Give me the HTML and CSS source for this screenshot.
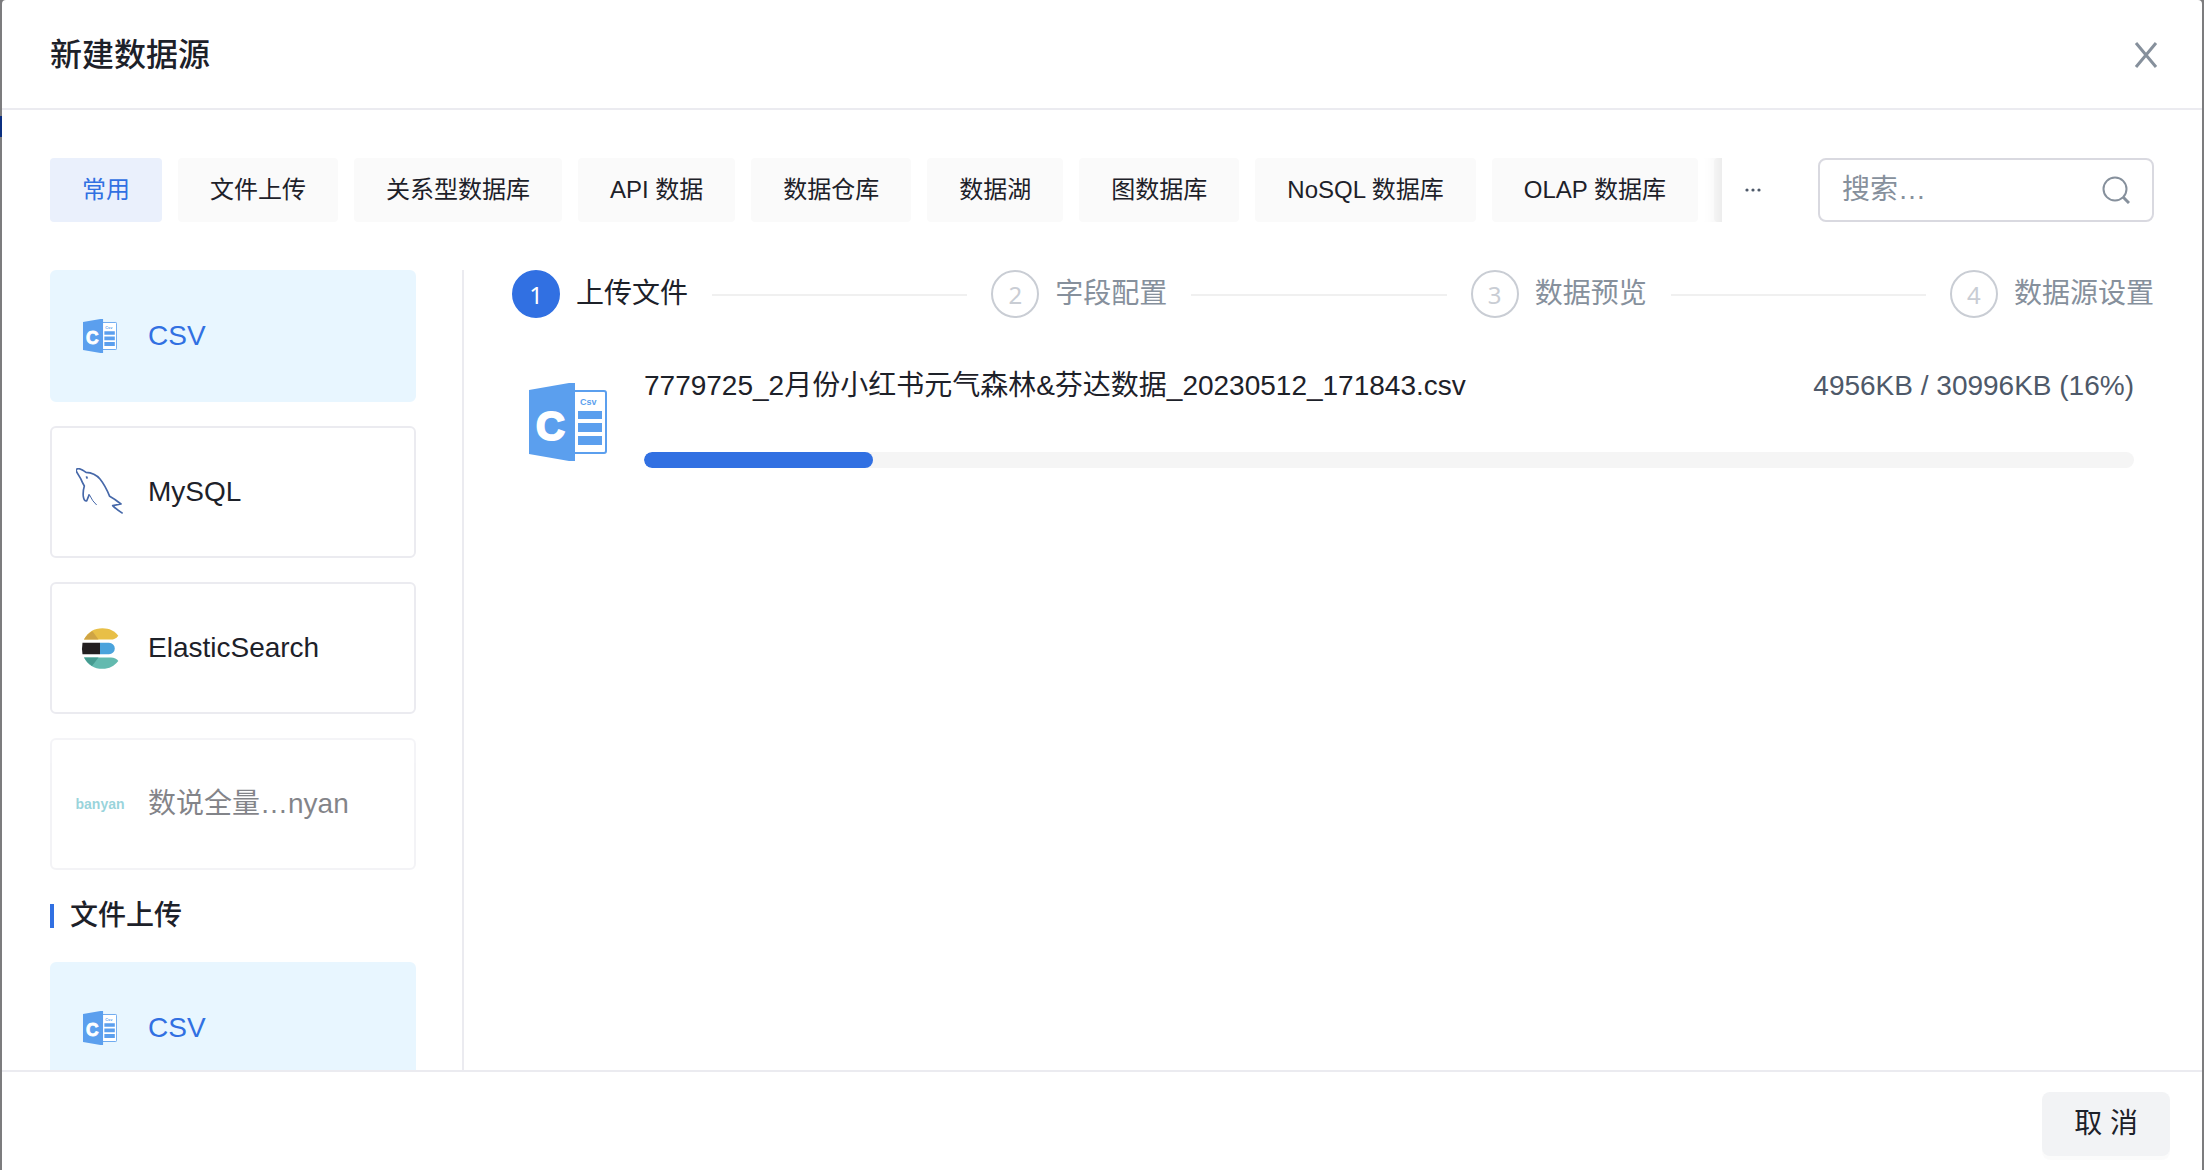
FILE: index.html
```html
<!DOCTYPE html>
<html lang="zh-CN">
<head>
<meta charset="utf-8">
<title>新建数据源</title>
<link rel="stylesheet" href="styles.css">
</head>
<body>
<div class="dialog" role="dialog" aria-labelledby="dialog-title">
  <header class="dialog-header">
    <h1 id="dialog-title" class="dialog-title">新建数据源</h1>
    <button class="close" type="button" aria-label="关闭">
      <svg width="24" height="26" viewBox="0 0 24 26"><path d="M2 1 22 25M22 1 2 25" fill="none" stroke="#86909c" stroke-width="3"/></svg>
    </button>
  </header>

  <main class="dialog-body">
    <div class="toolbar">
      <nav class="tabs">
        <button class="tab tab-active" type="button">常用</button>
        <button class="tab" type="button">文件上传</button>
        <button class="tab" type="button">关系型数据库</button>
        <button class="tab" type="button">API 数据</button>
        <button class="tab" type="button">数据仓库</button>
        <button class="tab" type="button">数据湖</button>
        <button class="tab" type="button">图数据库</button>
        <button class="tab" type="button">NoSQL 数据库</button>
        <button class="tab" type="button">OLAP 数据库</button>
        <button class="tab" type="button"></button>
      </nav>
      <button class="more" type="button" aria-label="更多">
        <svg width="18" height="4" viewBox="0 0 18 4" fill="#4e5969"><circle cx="3" cy="2" r="1.600"/><circle cx="9" cy="2" r="1.600"/><circle cx="15" cy="2" r="1.600"/></svg>
      </button>
      <label class="search">
        <input class="search-input" type="text" placeholder="搜索…" aria-label="搜索">
        <svg width="28" height="28" viewBox="0 0 28 28" fill="none" stroke="#86909c" stroke-width="2"><circle cx="13" cy="13" r="11.500"/><path d="m21 21 6 6" stroke-width="3"/></svg>
      </label>
    </div>

    <div class="content">
      <aside class="sources">
        <button class="source source-active" type="button">
          <span class="source-icon">
            <svg width="34" height="34" viewBox="0 0 78 78">
              <rect x="40" y="8" width="37" height="62" rx="2" fill="#fff" stroke="#5b9fee" stroke-width="2"/>
              <path d="M0 7 40 0h6v78h-6L0 71z" fill="#5b9fee"/>
              <path d="M49 28h24v8H49zM49 40h24v9H49zM49 53h24v9H49z" fill="#5b9fee"/>
              <text x="7" y="57" class="csv-letter">C</text>
              <text x="51" y="22" class="csv-tag">Csv</text>
            </svg>
          </span>CSV
        </button>
        <button class="source" type="button">
          <span class="source-icon">
            <svg width="48" height="48" viewBox="48 54 144 144" fill="none" stroke="#4668a9" stroke-width="5" stroke-linejoin="round">
              <path d="M88 133 80 153Q72 154 70 140 68 125 73 108 68 100 62 86L50 66Q46 57 54 56 62 55 78 67 104 68 120 87 136 107 149 139 165 148 183 162L158 167Q165 175 188 190"/>
              <path d="M88 134Q98 155 110 165" stroke-width="3"/>
              <path d="m79 79 3 7"/>
            </svg>
          </span>MySQL
        </button>
        <button class="source" type="button">
          <span class="source-icon">
            <svg width="48" height="48" viewBox="0 0 48 48">
              <path d="M8 15.6C12 8 18 4.3 26.5 4.3c7 0 12 2.700 15.800 7.500C40 15 37.500 15.600 35 15.600z" fill="#e8bf47"/>
              <path d="M8 15.600Q11 10 16.500 7.300L22.500 15.600z" fill="#cfa444"/>
              <path d="M6.500 18.700H24V30.300H6.500Q5.500 24.500 6.500 18.700z" fill="#231f20"/>
              <path d="M24 18.700h9a5.800 5.800 0 0 1 0 11.600h-9z" fill="#4aa3dc"/>
              <path d="M8 33.400H35c3 0 6 1.200 7.300 3.600-4 5-9 7.800-15.800 7.800C18 44.800 12 41 8 33.400z" fill="#63baaf"/>
              <path d="M8 33.400H22.500L16 42Q11 39 8 33.400z" fill="#459b90"/>
            </svg>
          </span>ElasticSearch
        </button>
        <button class="source" type="button" disabled>
          <span class="source-icon source-wordmark">banyan</span>数说全量…nyan
        </button>
        <h2 class="group-title">文件上传</h2>
        <button class="source source-active" type="button">
          <span class="source-icon">
            <svg width="34" height="34" viewBox="0 0 78 78">
              <rect x="40" y="8" width="37" height="62" rx="2" fill="#fff" stroke="#5b9fee" stroke-width="2"/>
              <path d="M0 7 40 0h6v78h-6L0 71z" fill="#5b9fee"/>
              <path d="M49 28h24v8H49zM49 40h24v9H49zM49 53h24v9H49z" fill="#5b9fee"/>
              <text x="7" y="57" class="csv-letter">C</text>
              <text x="51" y="22" class="csv-tag">Csv</text>
            </svg>
          </span>CSV
        </button>
      </aside>

      <section class="panel">
        <ol class="steps">
          <li class="step step-active"><span class="step-number">1</span>上传文件</li>
          <li class="step"><span class="step-number">2</span>字段配置</li>
          <li class="step"><span class="step-number">3</span>数据预览</li>
          <li class="step"><span class="step-number">4</span>数据源设置</li>
        </ol>
        <div class="upload">
          <svg class="upload-icon" width="80" height="78" viewBox="0 0 78 78">
            <rect x="40" y="8" width="37" height="62" rx="2" fill="#fff" stroke="#5b9fee" stroke-width="2"/>
            <path d="M0 7 40 0h6v78h-6L0 71z" fill="#5b9fee"/>
            <path d="M49 28h24v8H49zM49 40h24v9H49zM49 53h24v9H49z" fill="#5b9fee"/>
            <text x="7" y="57" class="csv-letter">C</text>
            <text x="51" y="22" class="csv-tag">Csv</text>
          </svg>
          <div class="upload-info">
            <div class="upload-text">
              <span>7779725_2月份小红书元气森林&amp;芬达数据_20230512_171843.csv</span>
              <span class="upload-size">4956KB / 30996KB (16%)</span>
            </div>
            <div class="progress" role="progressbar" aria-label="上传进度" aria-valuenow="16" aria-valuemin="0" aria-valuemax="100">
              <div class="progress-fill" style="width:15.4%"></div>
            </div>
          </div>
        </div>
      </section>
    </div>
  </main>

  <footer class="dialog-footer">
    <button class="cancel" type="button">取 消</button>
  </footer>
</div>
</body>
</html>
```
FILE: styles.css
```css
* {
  box-sizing: border-box;
}

body {
  margin: 0;
  height: 100vh;
  padding: 0 2px;
  overflow: hidden;
  background:
    linear-gradient(#0b2f80, #0b2f80) 0 116px / 2px 21px no-repeat,
    #7c7c7e;
  color: #1d2129;
  font: 28px/44px "Liberation Sans", "Noto Sans CJK SC", sans-serif;
}

button,
input {
  margin: 0;
  padding: 0;
  border: 0;
  background: none;
  color: inherit;
  font: inherit;
}

svg {
  display: block;
}

.csv-letter {
  fill: #fff;
  stroke: #fff;
  stroke-width: 2px;
  font: bold 40px "Liberation Sans", sans-serif;
}

.csv-tag {
  fill: #5b9fee;
  font: bold 9px "Liberation Sans", sans-serif;
}

.dialog {
  display: flex;
  flex-direction: column;
  height: 100%;
  border-radius: 4px 4px 0 0;
  background: #fff;
}

.dialog-header {
  display: flex;
  align-items: center;
  justify-content: space-between;
  padding: 33px 44px 31px 48px;
  border-bottom: 2px solid #ebebf0;
}

.dialog-title {
  margin: 0;
  font-size: 32px;
  font-weight: 500;
}

.dialog-body {
  display: flex;
  flex: 1;
  flex-direction: column;
  gap: 48px;
  min-height: 0;
  padding: 48px 48px 0;
}

.toolbar {
  display: flex;
}

.tabs {
  position: relative;
  display: flex;
  flex: 1;
  gap: 16px;
  min-width: 0;
  overflow: hidden;
}

.tabs::after {
  content: "";
  position: absolute;
  top: 0;
  right: 0;
  bottom: 0;
  width: 60px;
  box-shadow: inset -20px 0 16px -16px rgba(0, 0, 0, 0.08);
  pointer-events: none;
}

.tab {
  flex: none;
  height: 64px;
  padding: 0 32px;
  border-radius: 4px;
  background: #fafafa;
  font-size: 24px;
}

.tab-active {
  background: #eaf0fc;
  color: #3170e2;
}

.more {
  display: flex;
  align-items: center;
  justify-content: center;
  width: 62px;
}

.search {
  display: flex;
  align-items: center;
  width: 336px;
  height: 64px;
  margin-left: 34px;
  padding: 0 22px;
  border: 2px solid #d9d9e0;
  border-radius: 8px;
}

.search-input {
  flex: 1;
  min-width: 0;
  outline: 0;
}

.search-input::placeholder {
  color: #86909c;
  opacity: 1;
}

.content {
  display: flex;
  flex: 1;
  min-height: 0;
}

.sources {
  display: flex;
  flex: none;
  flex-direction: column;
  gap: 24px;
  width: 414px;
  padding-right: 46px;
  overflow: hidden;
  border-right: 2px solid #ebebf0;
}

.source {
  display: flex;
  flex: none;
  align-items: center;
  gap: 24px;
  height: 132px;
  padding: 0 24px;
  border: 2px solid #ebebf0;
  border-radius: 6px;
}

.source-active {
  border-color: #e8f6ff;
  background: #e8f6ff;
  color: #3170e2;
}

.source:disabled {
  opacity: 0.55;
}

.source-icon {
  display: flex;
  flex: none;
  align-items: center;
  justify-content: center;
  width: 48px;
}

.source-wordmark {
  color: #47b1bf;
  font-size: 14px;
  font-weight: bold;
}

.group-title {
  display: flex;
  align-items: center;
  gap: 16px;
  margin: 0;
  font-size: 28px;
  font-weight: 500;
}

.group-title::before {
  content: "";
  width: 4px;
  height: 24px;
  background: #3170e2;
}

.panel {
  flex: 1;
  min-width: 0;
  padding-left: 48px;
}

.steps {
  display: flex;
  margin: 0;
  padding: 0;
  list-style: none;
}

.step {
  display: flex;
  flex: 1;
  align-items: center;
  height: 48px;
  color: #86909c;
}

.step:last-child {
  flex: none;
}

.step:not(:last-child)::after {
  content: "";
  flex: 1;
  height: 2px;
  margin: 2px 24px 0;
  background: #f0f0f0;
}

.step-number {
  display: flex;
  align-items: center;
  justify-content: center;
  width: 48px;
  height: 48px;
  margin-right: 16px;
  padding-top: 2px;
  border: 2px solid #c9cdd4;
  border-radius: 50%;
  color: #c9cdd4;
  font-family: "Noto Sans", sans-serif;
  font-size: 24px;
}

.step-active {
  color: #1d2129;
}

.step-active .step-number {
  border-color: #3170e2;
  background: #3170e2;
  color: #fff;
}

.upload {
  display: flex;
  align-items: center;
  gap: 36px;
  margin-top: 46px;
  padding: 0 20px 0 16px;
}

.upload-icon {
  flex: none;
}

.upload-info {
  flex: 1;
  min-width: 0;
  padding-bottom: 12px;
}

.upload-text {
  display: flex;
  justify-content: space-between;
}

.upload-size {
  color: #4e5969;
}

.progress {
  height: 16px;
  margin-top: 44px;
  overflow: hidden;
  border-radius: 8px;
  background: #f5f5f5;
}

.progress-fill {
  height: 100%;
  border-radius: 8px;
  background: #3170e2;
}

.dialog-footer {
  display: flex;
  justify-content: flex-end;
  padding: 20px 32px 14px;
  border-top: 2px solid #ebebf0;
}

.cancel {
  height: 64px;
  padding: 0 32px;
  border-radius: 8px;
  background: #f2f3f5;
  box-shadow: 0 4px 0 rgba(0, 0, 0, 0.016);
}
```
